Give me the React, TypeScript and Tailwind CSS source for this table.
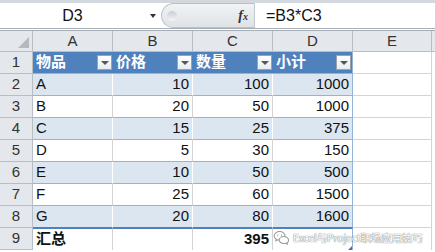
import React from "react";

const cols = ["A", "B", "C", "D", "E"];

const rows = [
  ["A", 10, 100, 1000],
  ["B", 20, 50, 1000],
  ["C", 15, 25, 375],
  ["D", 5, 30, 150],
  ["E", 10, 50, 500],
  ["F", 25, 60, 1500],
  ["G", 20, 80, 1600],
];

const font = { fontFamily: '"Liberation Sans", "Noto Sans CJK SC", sans-serif' };

function FilterButton() {
  return (
    <span className="absolute right-[1px] top-[3px] flex h-[15px] w-[15px] items-center justify-center border border-[#9aa3ad] bg-gradient-to-b from-white to-[#e9ecef]">
      <span className="h-0 w-0 border-x-[4px] border-t-[4px] border-x-transparent border-t-[#555]" />
    </span>
  );
}

function RowHead({ n }: { n: number }) {
  return (
    <div className="flex h-[22px] items-center justify-center border-b border-r border-[#b8bec6] bg-[#e4e7eb] text-[15px] text-[#333]">
      {n}
    </div>
  );
}

function WeChatIcon() {
  return (
    <svg width="17" height="15" viewBox="0 0 18 15" fill="none" stroke="#9a9a9a" strokeWidth="1.1">
      <path d="M7 1.2c3.2 0 5.8 2 5.8 4.5S10.2 10.2 7 10.2c-.7 0-1.3-.1-1.9-.3L3 11l.5-1.8C2 8.4 1.2 7.1 1.2 5.7 1.2 3.2 3.8 1.2 7 1.2z" fill="white" />
      <path d="M11.5 6.5c2.8 0 5 1.7 5 3.8 0 1.1-.6 2.1-1.6 2.8l.4 1.4-1.7-.9c-.7.2-1.4.3-2.1.3-2.8 0-5-1.7-5-3.7s2.2-3.7 5-3.7z" fill="white" />
      <circle cx="5" cy="5" r="0.7" fill="#9a9a9a" stroke="none" />
      <circle cx="9" cy="5" r="0.7" fill="#9a9a9a" stroke="none" />
    </svg>
  );
}

export default function App() {
  return (
    <div className="relative h-[252px] w-[435px] overflow-hidden bg-white" style={font}>
      {/* formula bar */}
      <div className="bg-[#d3d8de] pt-[3px]">
        <div className="flex h-[25px] items-stretch bg-white">
          <div className="flex w-[145px] items-center justify-center text-[16px] text-[#111]">D3</div>
          <div className="flex w-[16px] items-center justify-center">
            <span className="h-0 w-0 border-x-[3.5px] border-t-[4px] border-x-transparent border-t-[#333]" />
          </div>
          <div className="flex w-[93px] items-center justify-between rounded-l-full border border-r-0 border-[#b9c0c8] bg-gradient-to-b from-[#f1f3f5] to-[#dfe3e7] pl-[5px] pr-[6px]">
            <span className="h-[10px] w-[10px] rounded-full bg-gradient-to-b from-[#c9ced4] to-[#f4f5f7]" />
            <span className="text-[14px] font-bold italic text-[#333]" style={{ fontFamily: '"Liberation Serif", serif' }}>
              f<span className="text-[10px]">x</span>
            </span>
          </div>
          <div className="flex flex-1 items-center border-l border-[#c3c9d0] pl-[11px] text-[16px] text-[#111]">=B3*C3</div>
        </div>
        <div className="h-[3px] border-y border-[#a9afb6] bg-white" />
      </div>

      {/* grid */}
      <div className="grid grid-cols-[33px_80px_80px_80px_80px_79px_3px] text-[15px] text-[#111]">
        {/* column headers */}
        <div className="relative h-[21px] border-b border-r border-[#b8bec6] bg-[#e4e7eb]">
          <span className="absolute bottom-[3px] right-[3px] h-0 w-0 border-b-[11px] border-l-[11px] border-b-[#b4b9bf] border-l-transparent" />
        </div>
        {cols.map((c) => (
          <div key={c} className="flex h-[21px] items-center justify-center border-b border-r border-[#b8bec6] bg-[#e4e7eb] text-[15px] text-[#333]">
            {c}
          </div>
        ))}
        <div className="h-[21px] border-b border-[#b8bec6] bg-[#e4e7eb]" />

        {/* header row */}
        <RowHead n={1} />
        {["物品", "价格", "数量", "小计"].map((h, i) => (
          <div
            key={h}
            className={`relative flex h-[22px] items-center border-b border-[#95b3d7] bg-[#4f81bd] pl-[3px] text-[15px] font-bold text-white ${i === 3 ? "border-r" : ""}`}
          >
            {h}
            <FilterButton />
          </div>
        ))}
        <div className="h-[22px] border-b border-r border-[#d4d4d4]" />
        <div className="h-[22px]" />

        {rows.map((r, idx) => {
          const band = idx % 2 === 0;
          const bg = band ? "bg-[#dce6f1]" : "bg-white";
          const vline = band ? "border-r-white" : "border-r-[#d4d4d4]";
          const last = idx === rows.length - 1;
          return (
            <React.Fragment key={idx}>
              <RowHead n={idx + 2} />
              <div className={`flex h-[22px] items-center border-b border-r ${last ? "border-b-[#4f81bd]" : "border-b-[#95b3d7]"} ${vline} ${bg} pl-[3px]`}>
                {r[0]}
              </div>
              {[1, 2, 3].map((k) => (
                <div
                  key={k}
                  className={`flex h-[22px] items-center justify-end border-b border-r ${last ? "border-b-[#4f81bd]" : "border-b-[#95b3d7]"} ${k === 3 ? "border-r-[#95b3d7]" : vline} ${bg} pr-[3px]`}
                >
                  {r[k]}
                </div>
              ))}
              <div className="h-[22px] border-b border-r border-[#d4d4d4]" />
              <div className="h-[22px]" />
            </React.Fragment>
          );
        })}

        {/* total row */}
        <RowHead n={9} />
        <div className="flex h-[22px] items-center border-r border-t border-r-[#d4d4d4] border-t-[#4f81bd] pl-[3px] font-bold">汇总</div>
        <div className="h-[22px] border-r border-t border-r-[#d4d4d4] border-t-[#4f81bd]" />
        <div className="flex h-[22px] items-center justify-end border-r border-t border-r-[#d4d4d4] border-t-[#4f81bd] pr-[3px] font-bold">395</div>
        <div className="relative h-[22px] border-r border-t border-r-[#95b3d7] border-t-[#4f81bd]">
          <span className="absolute bottom-0 right-0 h-0 w-0 border-b-[4px] border-l-[4px] border-b-[#4f6fa8] border-l-transparent" />
        </div>
        <div className="h-[22px] border-r border-[#d4d4d4]" />
        <div className="h-[22px]" />
      </div>

      {/* watermark */}
      <div className="absolute left-[273px] top-[230px] flex items-center gap-[3px]">
        <WeChatIcon />
        <span
          className="text-[10.5px] tracking-[-0.2px] text-white"
          style={{ textShadow: "0 0 1px #777, 0 0 1px #777", fontFamily: '"Noto Sans CJK SC", sans-serif' }}
        >
          Excel与Project职场应用技巧
        </span>
      </div>
    </div>
  );
}
